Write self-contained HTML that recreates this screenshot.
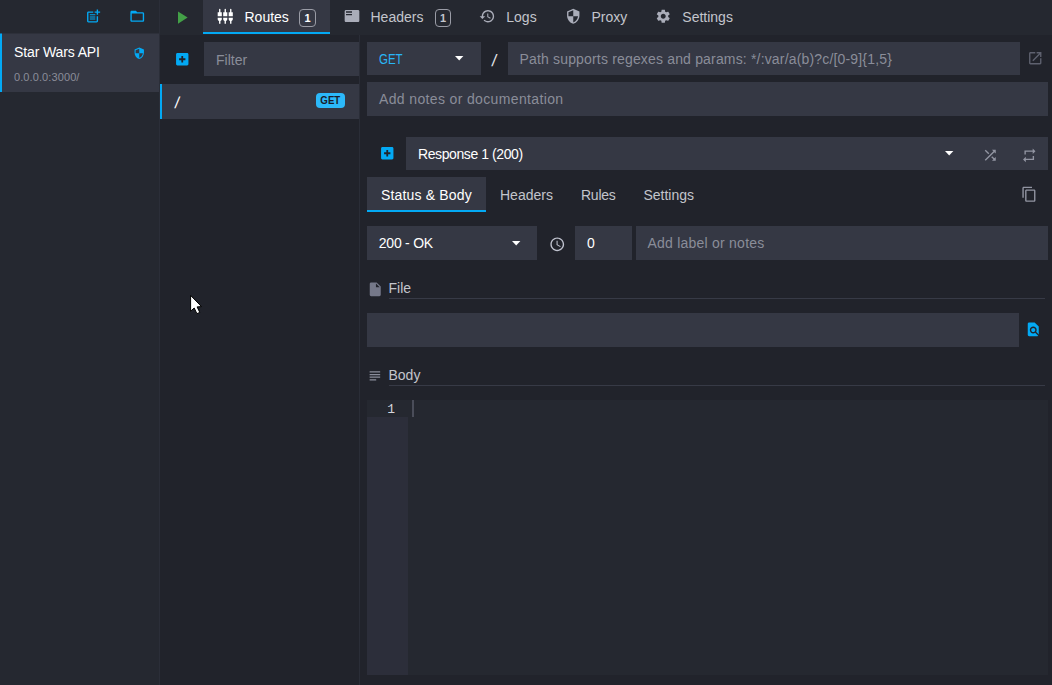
<!DOCTYPE html>
<html lang="en">
<head>
<meta charset="utf-8">
<title>Mockoon</title>
<style>
*{box-sizing:border-box;margin:0;padding:0}
html,body{width:1052px;height:685px;overflow:hidden;background:#21232b}
body{position:relative;font-family:"Liberation Sans",sans-serif;font-size:14px;color:#fff;-webkit-font-smoothing:antialiased}
.abs{position:absolute}
.t{position:absolute;white-space:nowrap;line-height:20px;height:20px}
svg{position:absolute;display:block;overflow:visible}
#sidebar{left:0;top:0;width:160px;height:685px;background:#252830}
#topbar{left:160px;top:0;width:892px;height:35px;background:#252830}
#routes{left:160px;top:35px;width:199px;height:650px;background:#21232b}
#routesborder{left:359px;top:35px;width:1px;height:650px;background:#2a2d37}
#content{left:360px;top:35px;width:692px;height:650px;background:#21232b}
.field{position:absolute;background:#353844}
.ph{color:#8a8d99}
.muted{color:#c3c5cc}
.badge{position:absolute;width:17px;height:18px;border:1px solid #9a9ca6;border-radius:4px;font-size:11px;font-weight:bold;line-height:17px;text-align:center;color:#fff}
</style>
</head>
<body>
<div id="sidebar" class="abs"></div>
<div id="topbar" class="abs"></div>
<div class="abs" style="left:159px;top:0;width:1px;height:685px;background:#2b2e38"></div>
<div id="routes" class="abs"></div>
<div id="routesborder" class="abs"></div>
<div id="content" class="abs"></div>

<!-- SIDEBAR -->
<div class="abs" style="left:0;top:33px;width:159px;height:1px;background:#2d303a"></div>
<div class="abs" style="left:0;top:34px;width:159px;height:58px;background:#353844"></div>
<div class="abs" style="left:0;top:33px;width:2px;height:1px;background:#146a96"></div>
<div class="abs" style="left:0;top:34px;width:2px;height:58px;background:#03a9f4"></div>
<div class="t" style="left:14px;top:42px;font-size:14px;letter-spacing:-0.12px">Star Wars API</div>
<div class="t" style="left:14px;top:67px;font-size:11px;letter-spacing:0.1px;color:#8a8d99">0.0.0.0:3000/</div>

<!-- TOPBAR -->
<div class="abs" style="left:203px;top:0;width:127px;height:34px;background:#353844"></div>
<div class="abs" style="left:203px;top:32px;width:127px;height:2px;background:#03a9f4"></div>
<div class="t" style="left:244.5px;top:7px">Routes</div>
<div class="badge" style="left:299px;top:9px">1</div>
<div class="t muted" style="left:370.5px;top:7px">Headers</div>
<div class="badge" style="left:435px;top:9px;width:16px;color:#c3c5cc">1</div>
<div class="t muted" style="left:506.3px;top:7px">Logs</div>
<div class="t muted" style="left:591.4px;top:7px">Proxy</div>
<div class="t muted" style="left:682.3px;top:7px">Settings</div>

<!-- ROUTES COLUMN -->
<div class="field" style="left:204px;top:42px;width:155px;height:34px"></div>
<div class="t ph" style="left:216px;top:50px">Filter</div>
<div class="abs" style="left:160px;top:84px;width:199px;height:35px;background:#353844"></div>
<div class="abs" style="left:160px;top:84px;width:2px;height:35px;background:#03a9f4"></div>
<div class="t" style="left:174.6px;top:93px;font-size:16px;transform:skewX(-8deg)">/</div>
<div class="abs" style="left:316px;top:93px;width:29px;height:15px;background:#2cb9fa;border-radius:4px;color:#1a1c2a;font-size:11px;font-weight:bold;line-height:15px;text-align:center"><span style="display:inline-block;transform:scaleX(0.88)">GET</span></div>

<!-- CONTENT -->
<div class="field" style="left:367px;top:42px;width:114px;height:33px"></div>
<div class="t" style="left:378.5px;top:49px;color:#29b6f6;transform:scaleX(0.82);transform-origin:0 50%">GET</div>
<div class="t" style="left:492.3px;top:49.5px;font-size:16.5px;color:#e4e5ea;transform:skewX(-8deg)">/</div>
<div class="field" style="left:508px;top:42px;width:512px;height:33px"></div>
<div class="t ph" style="left:519.5px;top:49px;letter-spacing:0.17px">Path supports regexes and params: */:var/a(b)?c/[0-9]{1,5}</div>
<div class="field" style="left:367px;top:82px;width:681px;height:34px"></div>
<div class="t ph" style="left:379px;top:89px;letter-spacing:0.36px">Add notes or documentation</div>

<div class="field" style="left:406px;top:137px;width:642px;height:33px"></div>
<div class="t" style="left:418px;top:144px;letter-spacing:-0.41px">Response 1 (200)</div>

<div class="abs" style="left:367px;top:177px;width:119px;height:35px;background:#353844"></div>
<div class="abs" style="left:367px;top:210px;width:119px;height:2px;background:#03a9f4"></div>
<div class="t" style="left:381px;top:185px;letter-spacing:0.17px">Status &amp; Body</div>
<div class="t muted" style="left:500px;top:185px">Headers</div>
<div class="t muted" style="left:581px;top:185px;letter-spacing:-0.26px">Rules</div>
<div class="t muted" style="left:643.4px;top:185px">Settings</div>

<div class="field" style="left:367px;top:226px;width:170px;height:34px"></div>
<div class="t" style="left:378.8px;top:233px;letter-spacing:-0.24px">200 - OK</div>
<div class="field" style="left:575px;top:226px;width:57px;height:34px"></div>
<div class="t" style="left:587px;top:233px">0</div>
<div class="field" style="left:636px;top:226px;width:412px;height:34px"></div>
<div class="t ph" style="left:647.5px;top:233px;letter-spacing:0.23px">Add label or notes</div>

<div class="t muted" style="left:388.5px;top:278px">File</div>
<div class="abs" style="left:389px;top:298px;width:656px;height:1px;background:#373a46"></div>
<div class="field" style="left:367px;top:313px;width:652px;height:34px"></div>

<div class="t muted" style="left:388.5px;top:365px">Body</div>
<div class="abs" style="left:389px;top:385px;width:656px;height:1px;background:#373a46"></div>

<!-- EDITOR -->
<div class="abs" style="left:367px;top:400px;width:681px;height:275px;background:#252830"></div>
<div class="abs" style="left:367px;top:400px;width:41px;height:275px;background:#2c2e3a"></div>
<div class="abs" style="left:367px;top:400px;width:41px;height:17px;background:#252830"></div>
<div class="t" style="left:367px;top:401px;width:28px;text-align:right;font-family:'Liberation Mono',monospace;font-size:13px;line-height:17px;height:17px;color:#d4d6dc">1</div>
<div class="abs" style="left:412px;top:400px;width:2px;height:17px;background:#4a4d59"></div>
<!-- CURSOR -->
<svg viewBox="0 0 13 20" style="left:189.9px;top:295.2px;width:13px;height:20px"><path d="M0.6 0.4 L0.6 16.2 L4.2 13.0 L6.9 18.7 L9.8 17.4 L7.1 11.9 L11.5 11.6 Z" fill="#fff" stroke="#000" stroke-width="1" stroke-linejoin="round"/></svg>
<!-- ICONS -->
<svg viewBox="0 0 24 24" style="left:84.95px;top:7.55px;width:16.50px;height:16.50px" fill="#03a9f4" fill-rule="evenodd"><path d="M17 19.22H5V7h7V5H5c-1.1 0-2 .9-2 2v12c0 1.1.9 2 2 2h12c1.1 0 2-.9 2-2v-7h-2v7.22z M19 2h-2v3h-3c.01.01 0 2 0 2h3v2.99c.01.01 2 0 2 0V7h3V5h-3V2z M7 9.2h8v1.5H7z M7 12.2h8v1.5H7z M7 15.2h8v1.5H7z"/></svg>
<svg viewBox="0 0 24 24" style="left:128.75px;top:7.65px;width:16.50px;height:16.50px" fill="#03a9f4" fill-rule="evenodd"><path d="M20 6h-8l-2-2H4c-1.1 0-1.99.9-1.99 2L2 18c0 1.1.9 2 2 2h16c1.1 0 2-.9 2-2V8c0-1.1-.9-2-2-2zm0 12H4V8h16v10z"/></svg>
<svg viewBox="0 0 24 24" style="left:171.00px;top:7.30px;width:21.00px;height:21.00px" fill="#43a047" fill-rule="evenodd"><path d="M8 5v14l11-7z"/></svg>
<svg viewBox="0 0 24 24" style="left:216.90px;top:7.70px;width:16.50px;height:16.50px" fill="#ffffff" fill-rule="evenodd"><path d="M5 2c0-.55-.45-1-1-1s-1 .45-1 1v4H1v6h6V6H5V2zm4 14c0 1.3.84 2.4 2 2.82V23h2v-4.18c1.16-.41 2-1.51 2-2.82v-2H9v2zm-8 0c0 1.3.84 2.4 2 2.82V23h2v-4.18C6.16 18.4 7 17.3 7 16v-2H1v2zM21 6V2c0-.55-.45-1-1-1s-1 .45-1 1v4h-2v6h6V6h-2zm-8-4c0-.55-.45-1-1-1s-1 .45-1 1v4H9v6h6V6h-2V2zm4 14c0 1.3.84 2.4 2 2.82V23h2v-4.18c1.16-.41 2-1.51 2-2.82v-2h-6v2z"/></svg>
<svg viewBox="0 0 24 24" style="left:344.00px;top:8.05px;width:16.00px;height:16.00px" fill="#aaadb9" fill-rule="evenodd"><path d="M21 3H3c-1.100 0-2 .9-2 2v14c0 1.100.9 2 2 2h18c1.100 0 2-.9 2-2V5c0-1.100-.9-2-2-2zm-9 8H3V9h9v2zm0-4H3V5h9v2z"/></svg>
<svg viewBox="0 0 24 24" style="left:479.45px;top:8.00px;width:16.50px;height:16.50px" fill="#aaadb9" fill-rule="evenodd"><path d="M13 3c-4.97 0-9 4.03-9 9H1l3.89 3.89.07.14L9 12H6c0-3.87 3.13-7 7-7s7 3.13 7 7-3.13 7-7 7c-1.93 0-3.68-.79-4.94-2.06l-1.42 1.42C8.27 19.99 10.51 21 13 21c4.97 0 9-4.03 9-9s-4.03-9-9-9zm-1 5v5l4.28 2.54.72-1.21-3.5-2.08V8H12z"/></svg>
<svg viewBox="0 0 24 24" style="left:564.95px;top:7.90px;width:16.50px;height:16.50px" fill="#aaadb9" fill-rule="evenodd"><path d="M12 1L3 5v6c0 5.55 3.84 10.74 9 12 5.16-1.26 9-6.45 9-12V5l-9-4zm0 10.99h7c-.53 4.12-3.28 7.79-7 8.94V12H5V6.3l7-3.11v8.8z"/></svg>
<svg viewBox="0 0 24 24" style="left:654.75px;top:7.95px;width:16.50px;height:16.50px" fill="#aaadb9" fill-rule="evenodd"><path d="M19.14 12.94c.04-.3.06-.61.06-.94 0-.32-.02-.64-.07-.94l2.03-1.58c.18-.14.23-.41.12-.61l-1.92-3.32c-.12-.22-.37-.29-.59-.22l-2.39.96c-.5-.38-1.03-.7-1.62-.94l-.36-2.54c-.04-.24-.24-.41-.48-.41h-3.84c-.24 0-.43.17-.47.41l-.36 2.54c-.59.24-1.13.57-1.62.94l-2.39-.96c-.22-.08-.47 0-.59.22L2.74 8.870c-.12.21-.08.47.12.61l2.030 1.580c-.05.3-.09.63-.09.94s.02.64.07.94l-2.030 1.580c-.18.14-.23.41-.12.61l1.920 3.320c.12.22.37.29.59.22l2.390-.96c.5.38 1.030.7 1.620.94l.36 2.540c.05.24.24.41.48.41h3.840c.24 0 .44-.17.47-.41l.36-2.540c.59-.24 1.130-.56 1.620-.94l2.390.96c.22.08.47 0 .59-.22l1.920-3.320c.12-.22.07-.47-.12-.61l-2.010-1.580zM12 15.600c-1.980 0-3.600-1.620-3.600-3.600s1.620-3.600 3.600-3.600 3.600 1.620 3.600 3.600-1.620 3.600-3.600 3.600z"/></svg>
<svg viewBox="0 0 24 24" style="left:132.90px;top:46.75px;width:12.50px;height:12.50px" fill="#03a9f4" fill-rule="evenodd"><path d="M12 1L3 5v6c0 5.55 3.84 10.74 9 12 5.16-1.26 9-6.45 9-12V5l-9-4zm0 10.99h7c-.53 4.12-3.28 7.79-7 8.94V12H5V6.3l7-3.11v8.8z"/></svg>
<svg viewBox="0 0 24 24" style="left:173.75px;top:50.75px;width:16.50px;height:16.50px" fill="#03a9f4" fill-rule="evenodd"><path d="M19 3H5c-1.11 0-2 .9-2 2v14c0 1.1.89 2 2 2h14c1.1 0 2-.9 2-2V5c0-1.1-.9-2-2-2zM16.6 13.3h-3.300v3.300h-2.600v-3.300H7.400v-2.600h3.300V7.400h2.600v3.300h3.300z"/></svg>
<svg viewBox="0 0 24 24" style="left:1026.75px;top:49.75px;width:16.50px;height:16.50px" fill="#5e616f" fill-rule="evenodd"><path d="M19 19H5V5h7V3H5c-1.110 0-2 .9-2 2v14c0 1.100.890 2 2 2h14c1.100 0 2-.9 2-2v-7h-2v7zM14 3v2h3.590l-9.830 9.830 1.410 1.410L19 6.410V10h2V3h-7z"/></svg>
<svg viewBox="0 0 24 24" style="left:378.75px;top:144.85px;width:16.50px;height:16.50px" fill="#03a9f4" fill-rule="evenodd"><path d="M19 3H5c-1.11 0-2 .9-2 2v14c0 1.1.89 2 2 2h14c1.1 0 2-.9 2-2V5c0-1.1-.9-2-2-2zM16.6 13.3h-3.300v3.300h-2.600v-3.300H7.400v-2.600h3.300V7.400h2.600v3.300h3.300z"/></svg>
<svg viewBox="0 0 24 24" style="left:981.95px;top:146.55px;width:16.50px;height:16.50px" fill="#9295a2" fill-rule="evenodd"><path d="M10.590 9.170L5.410 4 4 5.410l5.170 5.170 1.420-1.410zM14.500 4l2.040 2.040L4 18.590 5.410 20 17.960 7.460 20 9.500V4h-5.500zm.33 9.410l-1.410 1.410 3.130 3.130L14.500 20H20v-5.500l-2.040 2.040-3.130-3.130z"/></svg>
<svg viewBox="0 0 24 24" style="left:1020.95px;top:146.60px;width:16.50px;height:16.50px" fill="#9295a2" fill-rule="evenodd"><path d="M7 7h10v3l4-4-4-4v3H5v6h2V7zm10 10H7v-3l-4 4 4 4v-3h12v-6h-2v4z"/></svg>
<svg viewBox="0 0 24 24" style="left:1020.60px;top:185.80px;width:16.50px;height:16.50px" fill="#9295a2" fill-rule="evenodd"><path d="M16 1H4c-1.100 0-2 .9-2 2v14h2V3h12V1zm3 4H8c-1.100 0-2 .9-2 2v14c0 1.100.9 2 2 2h11c1.100 0 2-.9 2-2V7c0-1.100-.9-2-2-2zm0 16H8V7h11v14z"/></svg>
<svg viewBox="0 0 24 24" style="left:548.95px;top:235.50px;width:16.50px;height:16.50px" fill="#c0c3cf" fill-rule="evenodd"><path d="M11.990 2C6.470 2 2 6.480 2 12s4.470 10 9.990 10C17.520 22 22 17.520 22 12S17.520 2 11.990 2zM12 20c-4.420 0-8-3.580-8-8s3.580-8 8-8 8 3.580 8 8-3.580 8-8 8zm.5-13H11v6l5.250 3.150.75-1.230-4.500-2.670z"/></svg>
<svg viewBox="0 0 24 24" style="left:366.75px;top:280.65px;width:16.50px;height:16.50px" fill="#757889" fill-rule="evenodd"><path d="M6 2c-1.100 0-1.990.9-1.990 2L4 20c0 1.100.890 2 1.990 2H18c1.100 0 2-.9 2-2V8l-6-6H6zm7 7V3.500L18.500 9H13z"/></svg>
<svg viewBox="0 0 24 24" style="left:367.05px;top:368.00px;width:15.80px;height:15.80px" fill="#8a8d9b" fill-rule="evenodd"><path d="M14 17H4v2h10v-2zm6-8H4v2h16V9zM4 15h16v-2H4v2zM4 5v2h16V5H4z"/></svg>
<svg viewBox="0 0 24 24" style="left:1024.75px;top:320.65px;width:16.50px;height:16.50px" fill="#03a9f4" fill-rule="evenodd"><path d="M20 19.590V8l-6-6H6c-1.100 0-1.990.9-1.990 2L4 20c0 1.100.890 2 1.990 2H18c.45 0 .85-.15 1.190-.4l-4.430-4.430c-.8.52-1.740.83-2.760.83-2.760 0-5-2.240-5-5s2.240-5 5-5 5 2.240 5 5c0 1.020-.31 1.960-.83 2.750L20 19.590zM9 13c0 1.660 1.340 3 3 3s3-1.340 3-3-1.340-3-3-3-3 1.340-3 3z"/></svg>
<svg viewBox="0 0 10 5" preserveAspectRatio="none" style="left:454.80px;top:55.70px;width:8.40px;height:4.40px" fill="#fff"><path d="M0 0h10L5 5z"/></svg>
<svg viewBox="0 0 10 5" preserveAspectRatio="none" style="left:944.90px;top:150.90px;width:8.40px;height:4.40px" fill="#fff"><path d="M0 0h10L5 5z"/></svg>
<svg viewBox="0 0 10 5" preserveAspectRatio="none" style="left:512.00px;top:241.00px;width:8.40px;height:4.40px" fill="#fff"><path d="M0 0h10L5 5z"/></svg>
<!-- /ICONS -->
</body>
</html>
